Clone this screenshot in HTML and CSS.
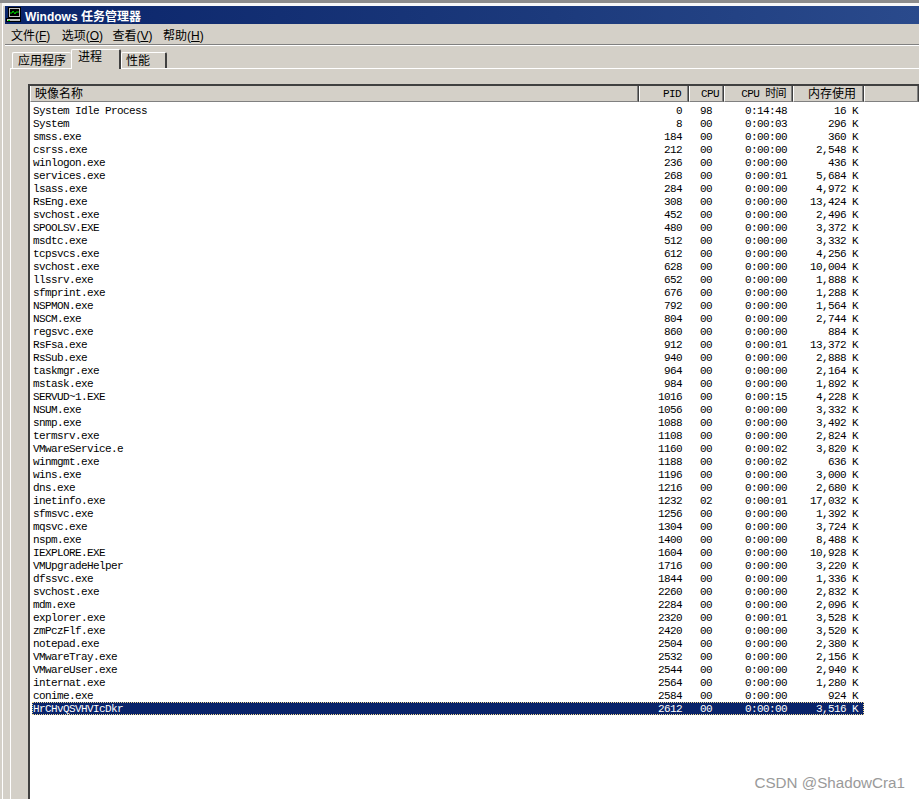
FILE: index.html
```html
<!DOCTYPE html>
<html lang="zh-CN">
<head>
  <meta charset="UTF-8">
  <title>Windows 任务管理器</title>
  <link rel="stylesheet" href="styles.css">
</head>
<body>
  <div class="topstrip"></div>
  <div class="window">
    <div class="titlebar">
      <svg class="appicon" width="16" height="16" viewBox="0 0 16 16">
        <rect x="2.5" y="0.5" width="12" height="10" fill="#c0c0c0" stroke="#000"/>
        <rect x="4" y="2" width="9" height="7" fill="#000"/>
        <path d="M4 6h2l1-2 2 3 1-2h3" fill="none" stroke="#00e000"/>
        <rect x="0.5" y="11.5" width="14" height="3" fill="#c0c0c0" stroke="#000"/>
        <rect x="2" y="13" width="2" height="1" fill="#00e000"/>
      </svg>
      <span class="title">Windows 任务管理器</span>
    </div>
    <div class="menubar">
      <span class="menu">文件(<u>F</u>)</span>
      <span class="menu">选项(<u>O</u>)</span>
      <span class="menu">查看(<u>V</u>)</span>
      <span class="menu">帮助(<u>H</u>)</span>
    </div>
    <div class="tabs">
      <span class="tab tab-apps">应用程序</span>
      <span class="tab tab-active">进程</span>
      <span class="tab tab-perf">性能</span>
    </div>
    <div class="panel">
      <div class="list">
        <div class="row header">
          <span class="col-name">映像名称</span>
          <span class="col-pid">PID</span>
          <span class="col-cpu">CPU</span>
          <span class="col-time">CPU 时间</span>
          <span class="col-mem">内存使用</span>
          <span class="col-rest"></span>
        </div>
        <div class="rows">
          <div class="row"><span class="col-name">System Idle Process</span><span class="col-pid">0</span><span class="col-cpu">98</span><span class="col-time">0:14:48</span><span class="col-mem">16 K</span></div>
          <div class="row"><span class="col-name">System</span><span class="col-pid">8</span><span class="col-cpu">00</span><span class="col-time">0:00:03</span><span class="col-mem">296 K</span></div>
          <div class="row"><span class="col-name">smss.exe</span><span class="col-pid">184</span><span class="col-cpu">00</span><span class="col-time">0:00:00</span><span class="col-mem">360 K</span></div>
          <div class="row"><span class="col-name">csrss.exe</span><span class="col-pid">212</span><span class="col-cpu">00</span><span class="col-time">0:00:00</span><span class="col-mem">2,548 K</span></div>
          <div class="row"><span class="col-name">winlogon.exe</span><span class="col-pid">236</span><span class="col-cpu">00</span><span class="col-time">0:00:00</span><span class="col-mem">436 K</span></div>
          <div class="row"><span class="col-name">services.exe</span><span class="col-pid">268</span><span class="col-cpu">00</span><span class="col-time">0:00:01</span><span class="col-mem">5,684 K</span></div>
          <div class="row"><span class="col-name">lsass.exe</span><span class="col-pid">284</span><span class="col-cpu">00</span><span class="col-time">0:00:00</span><span class="col-mem">4,972 K</span></div>
          <div class="row"><span class="col-name">RsEng.exe</span><span class="col-pid">308</span><span class="col-cpu">00</span><span class="col-time">0:00:00</span><span class="col-mem">13,424 K</span></div>
          <div class="row"><span class="col-name">svchost.exe</span><span class="col-pid">452</span><span class="col-cpu">00</span><span class="col-time">0:00:00</span><span class="col-mem">2,496 K</span></div>
          <div class="row"><span class="col-name">SPOOLSV.EXE</span><span class="col-pid">480</span><span class="col-cpu">00</span><span class="col-time">0:00:00</span><span class="col-mem">3,372 K</span></div>
          <div class="row"><span class="col-name">msdtc.exe</span><span class="col-pid">512</span><span class="col-cpu">00</span><span class="col-time">0:00:00</span><span class="col-mem">3,332 K</span></div>
          <div class="row"><span class="col-name">tcpsvcs.exe</span><span class="col-pid">612</span><span class="col-cpu">00</span><span class="col-time">0:00:00</span><span class="col-mem">4,256 K</span></div>
          <div class="row"><span class="col-name">svchost.exe</span><span class="col-pid">628</span><span class="col-cpu">00</span><span class="col-time">0:00:00</span><span class="col-mem">10,004 K</span></div>
          <div class="row"><span class="col-name">llssrv.exe</span><span class="col-pid">652</span><span class="col-cpu">00</span><span class="col-time">0:00:00</span><span class="col-mem">1,888 K</span></div>
          <div class="row"><span class="col-name">sfmprint.exe</span><span class="col-pid">676</span><span class="col-cpu">00</span><span class="col-time">0:00:00</span><span class="col-mem">1,288 K</span></div>
          <div class="row"><span class="col-name">NSPMON.exe</span><span class="col-pid">792</span><span class="col-cpu">00</span><span class="col-time">0:00:00</span><span class="col-mem">1,564 K</span></div>
          <div class="row"><span class="col-name">NSCM.exe</span><span class="col-pid">804</span><span class="col-cpu">00</span><span class="col-time">0:00:00</span><span class="col-mem">2,744 K</span></div>
          <div class="row"><span class="col-name">regsvc.exe</span><span class="col-pid">860</span><span class="col-cpu">00</span><span class="col-time">0:00:00</span><span class="col-mem">884 K</span></div>
          <div class="row"><span class="col-name">RsFsa.exe</span><span class="col-pid">912</span><span class="col-cpu">00</span><span class="col-time">0:00:01</span><span class="col-mem">13,372 K</span></div>
          <div class="row"><span class="col-name">RsSub.exe</span><span class="col-pid">940</span><span class="col-cpu">00</span><span class="col-time">0:00:00</span><span class="col-mem">2,888 K</span></div>
          <div class="row"><span class="col-name">taskmgr.exe</span><span class="col-pid">964</span><span class="col-cpu">00</span><span class="col-time">0:00:00</span><span class="col-mem">2,164 K</span></div>
          <div class="row"><span class="col-name">mstask.exe</span><span class="col-pid">984</span><span class="col-cpu">00</span><span class="col-time">0:00:00</span><span class="col-mem">1,892 K</span></div>
          <div class="row"><span class="col-name">SERVUD~1.EXE</span><span class="col-pid">1016</span><span class="col-cpu">00</span><span class="col-time">0:00:15</span><span class="col-mem">4,228 K</span></div>
          <div class="row"><span class="col-name">NSUM.exe</span><span class="col-pid">1056</span><span class="col-cpu">00</span><span class="col-time">0:00:00</span><span class="col-mem">3,332 K</span></div>
          <div class="row"><span class="col-name">snmp.exe</span><span class="col-pid">1088</span><span class="col-cpu">00</span><span class="col-time">0:00:00</span><span class="col-mem">3,492 K</span></div>
          <div class="row"><span class="col-name">termsrv.exe</span><span class="col-pid">1108</span><span class="col-cpu">00</span><span class="col-time">0:00:00</span><span class="col-mem">2,824 K</span></div>
          <div class="row"><span class="col-name">VMwareService.e</span><span class="col-pid">1160</span><span class="col-cpu">00</span><span class="col-time">0:00:02</span><span class="col-mem">3,820 K</span></div>
          <div class="row"><span class="col-name">winmgmt.exe</span><span class="col-pid">1188</span><span class="col-cpu">00</span><span class="col-time">0:00:02</span><span class="col-mem">636 K</span></div>
          <div class="row"><span class="col-name">wins.exe</span><span class="col-pid">1196</span><span class="col-cpu">00</span><span class="col-time">0:00:00</span><span class="col-mem">3,000 K</span></div>
          <div class="row"><span class="col-name">dns.exe</span><span class="col-pid">1216</span><span class="col-cpu">00</span><span class="col-time">0:00:00</span><span class="col-mem">2,680 K</span></div>
          <div class="row"><span class="col-name">inetinfo.exe</span><span class="col-pid">1232</span><span class="col-cpu">02</span><span class="col-time">0:00:01</span><span class="col-mem">17,032 K</span></div>
          <div class="row"><span class="col-name">sfmsvc.exe</span><span class="col-pid">1256</span><span class="col-cpu">00</span><span class="col-time">0:00:00</span><span class="col-mem">1,392 K</span></div>
          <div class="row"><span class="col-name">mqsvc.exe</span><span class="col-pid">1304</span><span class="col-cpu">00</span><span class="col-time">0:00:00</span><span class="col-mem">3,724 K</span></div>
          <div class="row"><span class="col-name">nspm.exe</span><span class="col-pid">1400</span><span class="col-cpu">00</span><span class="col-time">0:00:00</span><span class="col-mem">8,488 K</span></div>
          <div class="row"><span class="col-name">IEXPLORE.EXE</span><span class="col-pid">1604</span><span class="col-cpu">00</span><span class="col-time">0:00:00</span><span class="col-mem">10,928 K</span></div>
          <div class="row"><span class="col-name">VMUpgradeHelper</span><span class="col-pid">1716</span><span class="col-cpu">00</span><span class="col-time">0:00:00</span><span class="col-mem">3,220 K</span></div>
          <div class="row"><span class="col-name">dfssvc.exe</span><span class="col-pid">1844</span><span class="col-cpu">00</span><span class="col-time">0:00:00</span><span class="col-mem">1,336 K</span></div>
          <div class="row"><span class="col-name">svchost.exe</span><span class="col-pid">2260</span><span class="col-cpu">00</span><span class="col-time">0:00:00</span><span class="col-mem">2,832 K</span></div>
          <div class="row"><span class="col-name">mdm.exe</span><span class="col-pid">2284</span><span class="col-cpu">00</span><span class="col-time">0:00:00</span><span class="col-mem">2,096 K</span></div>
          <div class="row"><span class="col-name">explorer.exe</span><span class="col-pid">2320</span><span class="col-cpu">00</span><span class="col-time">0:00:01</span><span class="col-mem">3,528 K</span></div>
          <div class="row"><span class="col-name">zmPczFlf.exe</span><span class="col-pid">2420</span><span class="col-cpu">00</span><span class="col-time">0:00:00</span><span class="col-mem">3,520 K</span></div>
          <div class="row"><span class="col-name">notepad.exe</span><span class="col-pid">2504</span><span class="col-cpu">00</span><span class="col-time">0:00:00</span><span class="col-mem">2,380 K</span></div>
          <div class="row"><span class="col-name">VMwareTray.exe</span><span class="col-pid">2532</span><span class="col-cpu">00</span><span class="col-time">0:00:00</span><span class="col-mem">2,156 K</span></div>
          <div class="row"><span class="col-name">VMwareUser.exe</span><span class="col-pid">2544</span><span class="col-cpu">00</span><span class="col-time">0:00:00</span><span class="col-mem">2,940 K</span></div>
          <div class="row"><span class="col-name">internat.exe</span><span class="col-pid">2564</span><span class="col-cpu">00</span><span class="col-time">0:00:00</span><span class="col-mem">1,280 K</span></div>
          <div class="row"><span class="col-name">conime.exe</span><span class="col-pid">2584</span><span class="col-cpu">00</span><span class="col-time">0:00:00</span><span class="col-mem">924 K</span></div>
          <div class="row selected"><span class="col-name">HrCHvQSVHVIcDkr</span><span class="col-pid">2612</span><span class="col-cpu">00</span><span class="col-time">0:00:00</span><span class="col-mem">3,516 K</span></div>
        </div>
      </div>
    </div>
  </div>
  <div class="watermark">CSDN @ShadowCra1</div>
</body>
</html>
```

FILE: styles.css
```css
html, body {
  margin: 0;
  height: 799px;
  overflow: hidden;
}
body {
  position: relative;
  background: #d4d0c8;
  font-family: "Liberation Sans", "Noto Sans CJK SC", sans-serif;
  font-size: 12px;
  color: #000;
}
.topstrip {
  height: 3px;
  background: #8c8c8c;
}
.window {
  margin-left: 2px;
  height: 796px;
  padding-left: 2px;
  box-sizing: border-box;
  background: #d4d0c8;
  border-top: 3px solid #f8f8f8;
  border-left: 1px solid #fff;
  overflow: hidden;
}
.titlebar {
  display: flex;
  align-items: center;
  gap: 3px;
  height: 18px;
  padding-left: 1px;
  background: linear-gradient(90deg, #0a246a, #1c3a7c 60%, #2a4a8c);
  color: #fff;
}
.appicon {
  flex: none;
}
.title {
  font-weight: bold;
  white-space: nowrap;
}
.menubar {
  display: flex;
  height: 20px;
  align-items: center;
  padding-left: 6px;
  border-bottom: 1px solid #808080;
  box-shadow: 0 1px 0 #fff;
}
.menu {
  width: 50.7px;
  white-space: nowrap;
}
.tabs {
  display: flex;
  align-items: flex-end;
  height: 23px;
  padding-left: 7px;
}
.tab {
  box-sizing: border-box;
  height: 16px;
  line-height: 16px;
  background: #d4d0c8;
  border-top: 1px solid #fff;
  border-left: 1px solid #fff;
  border-right: 2px solid #404040;
  border-radius: 2px 2px 0 0;
  white-space: nowrap;
}
.tab-apps {
  width: 59px;
  padding-left: 5px;
  border-right: 0;
}
.tab-active {
  position: relative;
  z-index: 1;
  width: 50px;
  height: 20px;
  line-height: 15px;
  padding-left: 6px;
  margin-bottom: -1px;
}
.tab-perf {
  width: 46px;
  padding-left: 4px;
}
.panel {
  height: 760px;
  margin-left: 5px;
  padding: 15px 0 0 17px;
  border-top: 1px solid #fff;
  border-left: 1px solid #fff;
}
.list {
  height: 760px;
  background: #fff;
  border-top: 2px solid #404040;
  border-left: 2px solid #404040;
}
.row {
  display: flex;
  height: 13px;
  line-height: 14px;
  font-family: "Liberation Mono", "Noto Sans CJK SC", monospace;
  font-size: 11px;
  letter-spacing: -0.6px;
  white-space: nowrap;
}
.col-name {
  box-sizing: border-box;
  width: 609px;
  padding-left: 3px;
}
.col-pid {
  box-sizing: border-box;
  width: 50px;
  padding-right: 7px;
  text-align: right;
}
.col-cpu {
  box-sizing: border-box;
  width: 35px;
  padding-left: 11px;
}
.col-time {
  box-sizing: border-box;
  width: 69px;
  padding-right: 6px;
  text-align: right;
}
.col-mem {
  box-sizing: border-box;
  width: 71px;
  padding-right: 6px;
  text-align: right;
}
.rows {
  padding-top: 2px;
}
.header {
  height: 16px;
  line-height: 16px;
  background: #d4d0c8;
}
.header span {
  border-right: 1px solid #404040;
  border-left: 1px solid #fff;
  box-shadow: inset -1px 0 0 #808080;
  border-bottom: 1px solid #808080;
}
.header .col-name,
.header .col-mem {
  font-size: 12px;
  line-height: 14px;
  letter-spacing: 0;
  font-family: "Noto Sans CJK SC", sans-serif;
}
.header .col-name {
  padding-left: 4px;
}
.header .col-mem {
  padding-right: 7px;
}
.header .col-rest {
  flex: 1;
}
.selected {
  box-sizing: border-box;
  width: 832px;
  margin-left: 2px;
  background: #0a246a;
  color: #fff;
  outline: 1px dotted #f0d890;
  outline-offset: -1px;
}
.selected .col-name {
  width: 607px;
  padding-left: 1px;
}
.watermark {
  position: absolute;
  right: 14px;
  bottom: 8px;
  font-size: 15.2px;
  line-height: 16px;
  color: #9a9a9a;
  text-shadow: 0 0 2px #fff;
}
```
